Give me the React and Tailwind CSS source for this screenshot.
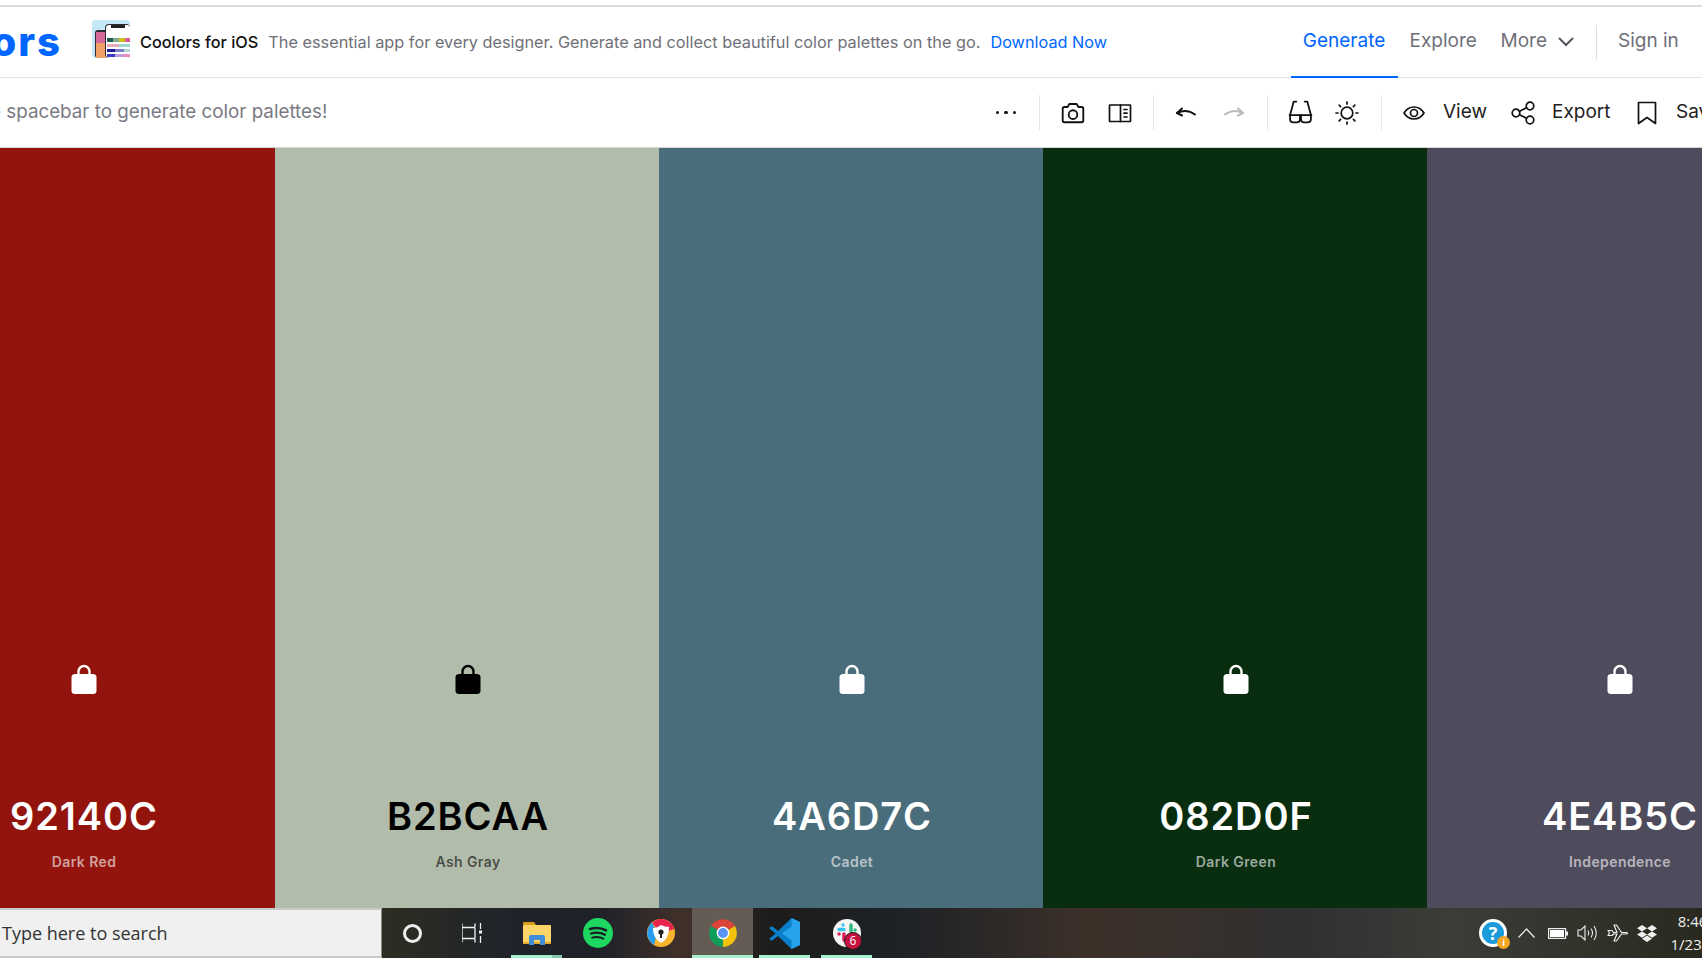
const colors = [
    { hex: "92140C", name: "Dark Red", bg: "bg-[#92140c]", text: "text-white", sub: "text-white/60", first: true },
    { hex: "B2BCAA", name: "Ash Gray", bg: "bg-[#b2bcaa]", text: "text-black", sub: "text-black/60" },
    { hex: "4A6D7C", name: "Cadet", bg: "bg-[#4a6d7c]", text: "text-white", sub: "text-white/60" },
    { hex: "082D0F", name: "Dark Green", bg: "bg-[#082d0f]", text: "text-white", sub: "text-white/60" },
    { hex: "4E4B5C", name: "Independence", bg: "bg-[#4e4b5c]", text: "text-white", sub: "text-white/60" },
];

const Sep = () => <div className="w-px h-[35px] bg-[#e4e4e9] shrink-0" />;

const Icon = ({ children, w = 24, h = 24, box = "0 0 24 24", stroke = "#111", sw = 1.7 }) => (
    <svg width={w} height={h} viewBox={box} fill="none" stroke={stroke} strokeWidth={sw} strokeLinecap="round" strokeLinejoin="round">
        {children}
    </svg>
);

const ToolBtn = ({ children, className = "w-[48px]" }) => (
    <div className={`${className} h-[35px] flex items-center justify-center shrink-0`}>{children}</div>
);

const Lock = ({ color }) => (
    <svg width="26" height="30" viewBox="0 0 26 30">
        <path d="M7.500 11V7.500a5.500 5.500 0 0 1 11 0V11" fill="none" stroke={color} strokeWidth="2.400" />
        <rect x="0.500" y="10" width="25" height="20" rx="3.500" fill={color} />
    </svg>
);

const AppIcon = () => (
    <svg width="38" height="38" viewBox="0 0 38 38" className="shrink-0">
        <rect width="38" height="38" rx="4" fill="#c5e8f7" />
        <rect x="3" y="10" width="14" height="28" rx="3" fill="#2b2b33" />
        <rect x="4" y="12" width="12" height="11" fill="#d6669a" />
        <rect x="4" y="23" width="12" height="15" fill="#f0a066" />
        <rect x="13" y="4" width="25" height="34" rx="4" fill="#2b2b33" />
        <rect x="14" y="5" width="24" height="33" rx="3" fill="#fff" />
        <rect x="19" y="5" width="14" height="3" fill="#222" />
        <rect x="15" y="18" width="6" height="4" fill="#1e5b4b" />
        <rect x="21" y="18" width="6" height="4" fill="#7faa8c" />
        <rect x="27" y="18" width="6" height="4" fill="#d1bc1c" />
        <rect x="33" y="18" width="5" height="4" fill="#d85c98" />
        <rect x="15" y="24" width="12" height="3" fill="#e9a9b6" />
        <rect x="27" y="24" width="11" height="3" fill="#9cd6cd" />
        <rect x="15" y="29" width="8" height="3" fill="#1c1c9a" />
        <rect x="23" y="29" width="9" height="3" fill="#7b7bc9" />
        <rect x="32" y="29" width="6" height="3" fill="#b5d6d6" />
        <rect x="15" y="34" width="8" height="3" fill="#3d3dc4" />
        <rect x="23" y="34" width="8" height="3" fill="#b99be0" />
        <rect x="31" y="34" width="7" height="3" fill="#e990c0" />
    </svg>
);

const TaskBtn = ({ children, className }) => (
    <div className={`${className} h-full flex items-center justify-center shrink-0`}>{children}</div>
);

const Chrome = () => (
    <svg width="28" height="28" viewBox="0 0 28 28">
        <path d="M14 14 L2 7 A14 14 0 0 1 26 7 Z" fill="#db4437" />
        <path d="M14 14 L26 7 A14 14 0 0 1 14 28 Z" fill="#f4c20d" />
        <path d="M14 14 L14 28 A14 14 0 0 1 2 7 Z" fill="#0f9d58" />
        <circle cx="14" cy="14" r="6.400" fill="#fff" />
        <circle cx="14" cy="14" r="5" fill="#5a95f5" />
    </svg>
);

const App = () => {
    return (
        <div className="w-[1702px] h-[958px] overflow-hidden flex flex-col bg-white font-[Inter,sans-serif]">
            {/* top strip */}
            <div className="h-[7px] shrink-0 border-b-2 border-[#dcdce4]" />

            {/* Header */}
            <header className="h-[71px] shrink-0 flex items-center border-b border-[#e2e2e6]">
                <div className="w-[62px] shrink-0 flex justify-end">
                    <span className="text-[40px] leading-none font-extrabold text-[#0066ff] tracking-[2px] whitespace-nowrap">coolors</span>
                </div>
                <div className="ml-[30px] -mt-[6px]">
                    <AppIcon />
                </div>
                <span className="ml-[10px] mt-[1px] text-[16.300px] font-medium text-[#111] whitespace-nowrap">Coolors for iOS</span>
                <span className="ml-[10px] mt-[1px] text-[16.300px] text-[#6f6f78] whitespace-nowrap">The essential app for every designer. Generate and collect beautiful color palettes on the go.</span>
                <span className="ml-[10px] mt-[1px] text-[16.300px] text-[#0066ff] whitespace-nowrap">Download Now</span>

                <nav className="ml-auto -mr-[60px] flex items-center h-full text-[19px] text-[#6f6f78] shrink-0">
                    <div className="w-[107px] h-full flex items-center justify-center pb-[1px] text-[#0066ff] border-b-2 border-[#0066ff] -mb-px">Generate</div>
                    <div className="ml-[12px] mb-[1px] w-[66px] text-center">Explore</div>
                    <div className="ml-[25px] mb-[1px] flex items-center">
                        More
                        <svg className="ml-[11px]" width="16" height="10" viewBox="0 0 16 10" fill="none" stroke="#55555e" strokeWidth="2" strokeLinecap="round">
                            <path d="M1.500 1.500 8 8l6.500-6.500" />
                        </svg>
                    </div>
                    <div className="ml-[22px] w-px h-[35px] bg-[#dedee2]" />
                    <div className="ml-[21px] mb-[1px] w-[60px] text-center whitespace-nowrap">Sign in</div>
                    <div className="ml-[24px] w-[60px] h-[32px] rounded-[8px] bg-[#0066ff]" />
                </nav>
            </header>

            {/* Toolbar */}
            <div className="h-[69px] shrink-0 flex items-center">
                <span className="-ml-[82px] mb-[1px] text-[18.800px] text-[#7a7a84] whitespace-nowrap">Press the spacebar to generate color palettes!</span>
                <div className="ml-auto -mr-[34px] flex items-center shrink-0 text-[19px] text-[#222]">
                    <ToolBtn>
                        <div className="flex gap-[5px]">
                            <div className="w-[3.500px] h-[3.500px] rounded-full bg-[#111]" />
                            <div className="w-[3.500px] h-[3.500px] rounded-full bg-[#111]" />
                            <div className="w-[3.500px] h-[3.500px] rounded-full bg-[#111]" />
                        </div>
                    </ToolBtn>
                    <div className="ml-[9px]"><Sep /></div>
                    <ToolBtn className="ml-[9px] w-[48px]">
                        <Icon w={26} h={26}>
                            <path d="M4 6.500h3l1.600-2.800h6.800L17 6.500h3a1.500 1.500 0 0 1 1.500 1.500v11a1.500 1.500 0 0 1-1.500 1.500H4A1.500 1.500 0 0 1 2.500 19V8A1.500 1.500 0 0 1 4 6.500Z" />
                            <circle cx="12" cy="13.500" r="4" />
                        </Icon>
                    </ToolBtn>
                    <ToolBtn className="w-[46px]">
                        <Icon>
                            <rect x="1.500" y="4" width="21" height="16.500" rx="0.500" />
                            <path d="M12.500 4v16.500M16 8.500h3M16 12.200h3M16 16h3" />
                        </Icon>
                    </ToolBtn>
                    <div className="ml-[10px]"><Sep /></div>
                    <ToolBtn className="ml-[8px] w-[48px]">
                        <Icon w={22} h={18} box="0 0 22 16" sw={2}>
                            <path d="M7 3.500 2 8l5 2.500" />
                            <path d="M2 8c5-2.500 12-3 18 1.500" />
                        </Icon>
                    </ToolBtn>
                    <ToolBtn className="w-[48px]">
                        <Icon w={22} h={18} box="0 0 22 16" stroke="#b9b9bf" sw={2}>
                            <path d="M15 3.500 20 8l-5 2.500" />
                            <path d="M20 8C15 5.500 8 5 2 9.500" />
                        </Icon>
                    </ToolBtn>
                    <div className="ml-[9px]"><Sep /></div>
                    <ToolBtn className="ml-[8px] w-[48px]">
                        <Icon w={25} h={25}>
                            <path d="M2 14.500 5.500 1.500H8M22 14.500 18.500 1.500H16" />
                            <path d="M1.500 14.500h21" />
                            <path d="M2 14.500v4a3 3 0 0 0 3 3h3.500a3 3 0 0 0 3-3v-4M12.500 14.500v4a3 3 0 0 0 3 3H19a3 3 0 0 0 3-3v-4" />
                        </Icon>
                    </ToolBtn>
                    <ToolBtn className="w-[46px]">
                        <Icon>
                            <circle cx="12" cy="12" r="5.800" />
                            <path d="M12 1v2M12 21v2M1 12h2M21 12h2M4.200 4.200l1.400 1.400M18.400 18.400l1.400 1.400M4.200 19.800l1.400-1.400M18.400 5.600l1.400-1.400" />
                        </Icon>
                    </ToolBtn>
                    <div className="ml-[11px]"><Sep /></div>
                    <ToolBtn className="ml-[21px] w-[22px]">
                        <Icon w={22} h={16} box="0 0 22 16">
                            <path d="M1 8c2.500-4 6-6 10-6s7.500 2 10 6c-2.500 4-6 6-10 6S3.500 12 1 8Z" />
                            <circle cx="11" cy="8" r="3.500" />
                        </Icon>
                    </ToolBtn>
                    <span className="ml-[18px] mb-[1px] w-[43px]">View</span>
                    <ToolBtn className="ml-[25px] w-[24px]">
                        <Icon>
                            <circle cx="5" cy="12" r="3.800" />
                            <circle cx="19" cy="5" r="3.800" />
                            <circle cx="19" cy="19" r="3.800" />
                            <path d="m8.500 10.300 7-3.600M8.500 13.700l7 3.600" />
                        </Icon>
                    </ToolBtn>
                    <span className="ml-[17px] mb-[1px] w-[57px]">Export</span>
                    <ToolBtn className="ml-[28px] w-[20px]">
                        <Icon w={20} h={24} box="0 0 20 24">
                            <path d="M1.500 1.500h17v21L10 16.500l-8.500 6Z" />
                        </Icon>
                    </ToolBtn>
                    <span className="ml-[19px] mb-[1px] w-[60px]">Save</span>
                </div>
            </div>

            {/* Palette */}
            <main className="flex-1 min-h-0 flex border-t border-[#d8d8d8]">
                {colors.map((c) => (
                    <div key={c.hex} className={`${c.bg} ${c.first ? "-ml-[109px]" : ""} w-[384px] shrink-0 flex flex-col items-center pl-[2px] pt-[516px]`}>
                        <Lock color={c.text === "text-black" ? "#000" : "#fff"} />
                        <div className={`${c.text} mt-[99px] text-[38px] leading-[46px] font-semibold tracking-[0.900px]`}>{c.hex}</div>
                        <div className={`${c.sub} mt-[13px] text-[14px] leading-[20px] font-semibold tracking-[0.400px]`}>{c.name}</div>
                    </div>
                ))}
            </main>

            {/* Taskbar */}
            <footer className="h-[50px] shrink-0 flex items-stretch bg-[linear-gradient(90deg,#2c2e22_382px,#20232a_510px,#1f2129_600px,#40302a_680px,#1d1c1c_770px,#1e2226_900px,#3d3029_1090px,#303030_1300px,#3b3d38_1450px,#29291f_1702px)] text-white">
                <div className="w-[382px] shrink-0 flex items-center bg-[#f0f0f0] border-y-2 border-[#c9c9c9] border-r border-r-[#888] pl-[2px] text-[18px] text-[#333] font-['Open_Sans',sans-serif]">
                    Type here to search
                </div>
                <TaskBtn className="w-[60px]">
                    <div className="w-[19px] h-[19px] rounded-full border-[3px] border-[#eee]" />
                </TaskBtn>
                <TaskBtn className="w-[60px]">
                    <svg width="20" height="20" viewBox="0 0 20 20" fill="none" stroke="#f2f2f2" strokeWidth="1.300">
                        <path d="M0 .5v4M13 .5v4M0 15.500v4M13 15.500v4M0 4.500h13M0 15.500h13M0 5v10M13 5v10M18.500 0v6M18.500 13v7" />
                        <rect x="17" y="7.500" width="3" height="3" fill="#f2f2f2" stroke="none" />
                    </svg>
                </TaskBtn>
                <TaskBtn className="relative ml-[9px] w-[51px] border-b-[3px] border-[#a5f1cf]">
                    <svg className="mt-[3px]" width="28" height="24" viewBox="0 0 28 24">
                        <path d="M0 2a1 1 0 0 1 1-1h10l2 3h-13Z" fill="#d9a020" />
                        <rect x="0" y="4" width="28" height="19" rx="1" fill="#fcd467" />
                        <rect x="0" y="21" width="28" height="2" fill="#e3a92f" />
                        <path d="M6 24v-8a2 2 0 0 1 2-2h12a2 2 0 0 1 2 2v8h-5v-5h-6v5Z" fill="#3e8fd8" />
                    </svg>
                    {/* second window marker */}
                    <div className="absolute right-0 -bottom-[3px] w-[10px] h-[3px] bg-[#86c8ae]" />
                </TaskBtn>
                <TaskBtn className="ml-[6px] w-[60px]">
                    <svg width="30" height="30" viewBox="0 0 30 30" fill="none" stroke="#1a1d24" strokeLinecap="round">
                        <circle cx="15" cy="15" r="15" fill="#1ed760" stroke="none" />
                        <path d="M7 11c5.500-1.600 11.500-1.200 16 1.300" strokeWidth="2.600" />
                        <path d="M8 15.500c4.800-1.300 10-.9 14 1.300" strokeWidth="2.200" />
                        <path d="M9 19.600c4-1 8.300-.7 11.500 1.100" strokeWidth="1.800" />
                    </svg>
                </TaskBtn>
                <TaskBtn className="ml-[2px] w-[61px]">
                    <svg width="28" height="28" viewBox="0 0 28 28">
                        <circle cx="14" cy="14" r="14" fill="#f6b52c" />
                        <path d="M14 0a14 14 0 0 1 13.500 10L14 14 5 4a14 14 0 0 1 9-4Z" fill="#e8254f" />
                        <path d="M5 3.500A14 14 0 0 0 7 26l3-12Z" fill="#2a9df0" />
                        <path d="M6 9c4 0 6-2 8-3 3 1 5 2 8 2 0 7-2 13-8 16C9 21 6 16 6 9Z" fill="#fff" />
                        <circle cx="14" cy="13" r="2.600" fill="#222" />
                        <rect x="13" y="14" width="2" height="5" fill="#222" />
                    </svg>
                </TaskBtn>
                <TaskBtn className="ml-px w-[61px] bg-[#655b55] border-b-[3px] border-[#a5f1cf]">
                    <div className="mt-[3px]"><Chrome /></div>
                </TaskBtn>
                <TaskBtn className="ml-[6px] w-[51px] border-b-[3px] border-[#a5f1cf]">
                    <svg className="mt-[3px]" width="31" height="31" viewBox="0 0 31 31">
                        <path d="M22.500 0 31 4v23l-8.500 4L9 18l-6 4.800L0 21l6.500-5.500L0 10l3-1.800L9 13Z" fill="#0a7fc9" />
                        <path d="M22.500 0 31 4v23l-8.500 4ZM22.500 8.500 13 15.500l9.500 7Z" fill="#27a2ec" fillRule="evenodd" />
                    </svg>
                </TaskBtn>
                <TaskBtn className="relative ml-[11px] w-[51px] border-b-[3px] border-[#a5f1cf]">
                    <svg className="mt-[3px]" width="28" height="28" viewBox="0 0 28 28" strokeLinecap="round" strokeWidth="3.400" fill="none">
                        <circle cx="14" cy="14" r="14" fill="#f5f5f5" />
                        <path d="M10 6v.1M6 10.500h5" stroke="#36c5f0" />
                        <path d="M18 6v6M22 11h.1" stroke="#2eb67d" />
                        <path d="M6 15h.1M11 15v6" stroke="#e01e5a" />
                        <path d="M15 17h6" stroke="#ecb22e" />
                    </svg>
                    {/* unread badge */}
                    <div className="absolute left-[23px] top-[24px] w-[18px] h-[18px] rounded-full bg-[#c5123f] border border-[#1e1e1e] flex items-center justify-center text-[12px] leading-none text-white font-['Open_Sans',sans-serif]">6</div>
                </TaskBtn>

                {/* Tray */}
                <div className="ml-auto -mr-[39px] flex items-center shrink-0">
                    <div className="relative w-[28px] h-[28px] rounded-full bg-[#1a9bdc] border-[3px] border-white flex items-center justify-center text-[18px] leading-none font-bold text-white font-['Open_Sans',sans-serif]">
                        ?
                        <div className="absolute -right-[6px] -bottom-[5px] w-[13px] h-[13px] rounded-full bg-[#f5a623] flex items-center justify-center text-[9px] font-bold">i</div>
                    </div>
                    <svg className="ml-[11px]" width="17" height="10" viewBox="0 0 17 10" fill="none" stroke="#eee" strokeWidth="1.200">
                        <path d="M.5 9.500 8.500 1l8 8.500" />
                    </svg>
                    <svg className="ml-[13px]" width="20" height="11" viewBox="0 0 20 11">
                        <rect x=".6" y=".6" width="17" height="9.800" fill="none" stroke="#eee" strokeWidth="1.200" />
                        <rect x="2" y="2" width="14" height="7" fill="#fff" />
                        <rect x="18" y="3.500" width="2" height="4" fill="#eee" />
                    </svg>
                    <svg className="ml-[9px]" width="21" height="18" viewBox="0 0 21 18" fill="none" stroke="#eee" strokeWidth="1.100">
                        <path d="M1 6h3l4-4v14l-4-4H1Z" />
                        <path d="M11 6.500c1 1.500 1 3.500 0 5M14 4.500c2 3 2 6 0 9M17 2c3 4 3 10 0 14" />
                    </svg>
                    <svg className="ml-[9px]" width="21" height="18" viewBox="0 0 21 18" fill="none" stroke="#eee" strokeWidth="1.200" strokeLinejoin="round">
                        <path d="M1 6.500h4l1.500 2H10L7 1h2.500l5 7.500H19c2 0 2 1.500 0 1.500h-4.500l-5 7H7l3-7H6.500L5 11.500H1l1.500-2.500Z" />
                    </svg>
                    <svg className="ml-[9px]" width="20" height="17" viewBox="0 0 20 17" fill="#eee">
                        <path d="M5 0 0 3.200l5 3.200 5-3.200ZM15 0l-5 3.200 5 3.200 5-3.200ZM5 6.400 0 9.600l5 3.200 5-3.200ZM15 6.400l-5 3.200 5 3.200 5-3.200ZM5 13.800 10 17l5-3.200-5-3.200Z" />
                    </svg>
                    <div className="ml-[14px] w-[70px] flex flex-col items-center text-[15px] leading-[23px] text-[#eee] font-['Open_Sans',sans-serif] whitespace-nowrap">
                        <span>8:46 AM</span>
                        <span>1/23/2021</span>
                    </div>
                </div>
            </footer>
        </div>
    );
};

export default App;
